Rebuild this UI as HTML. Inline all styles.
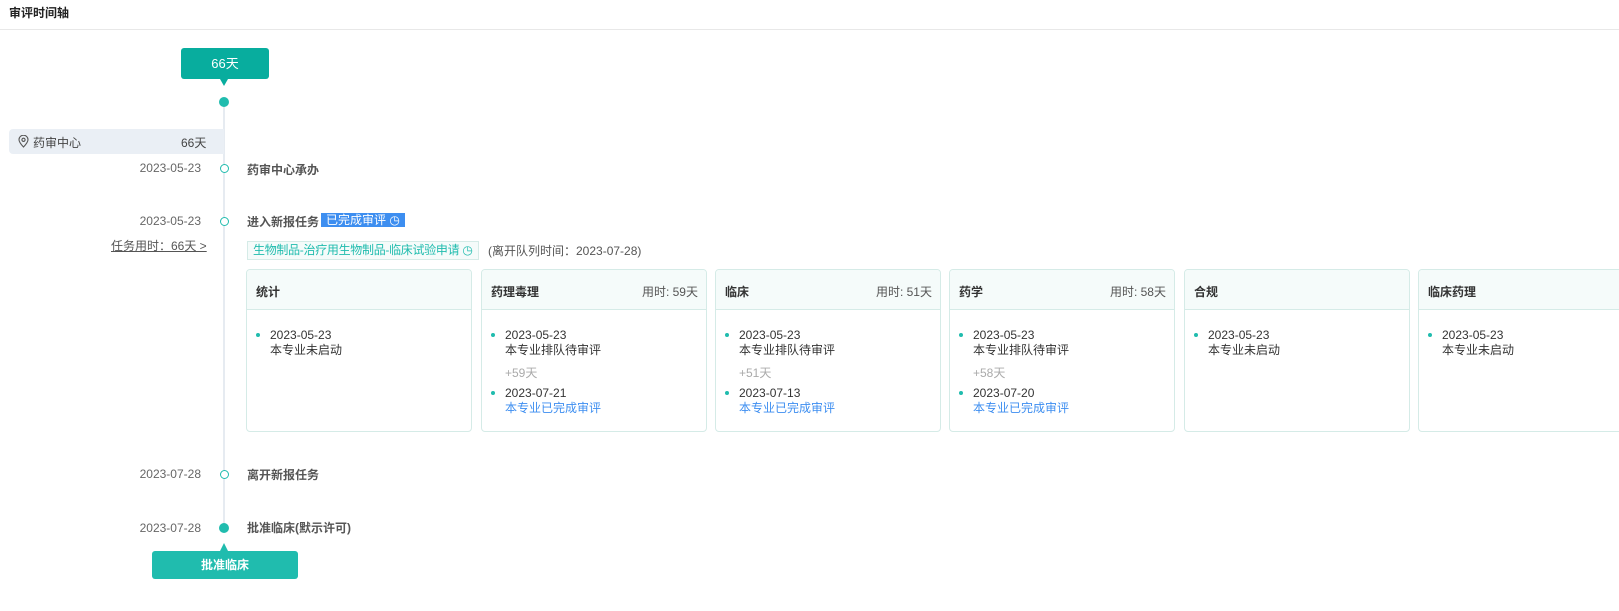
<!DOCTYPE html><html><head><meta charset="utf-8"><style>
*{margin:0;padding:0;box-sizing:border-box}
body{width:1619px;height:611px;overflow:hidden;background:#fff;font-family:"Liberation Sans","Noto Sans CJK SC",sans-serif;font-size:12px;color:#555;position:relative}
.a{position:absolute;white-space:nowrap}
.hdr{left:0;top:0;width:1619px;height:30px;border-bottom:1px solid #e8e8e8}
.hdr span{position:absolute;left:9px;top:4px;font-weight:bold;color:#222;font-size:12px}
.date{color:#666;width:201px;text-align:right;left:0}
.t{left:247px;font-weight:bold;color:#555}
.dot{width:9px;height:9px;border-radius:50%;left:220px}
.o{border:1.5px solid #20bcae;background:#fff}
.f{background:#20bcae}
.card{position:absolute;top:269px;width:226px;height:163px;border:1px solid #d5ebe7;border-radius:4px;overflow:hidden}
.card .h{height:40px;background:#f5fbfa;border-bottom:1px solid #d5ebe7;padding:13px 9px 0;font-weight:bold;color:#333;position:relative}
.card .h i{position:absolute;right:8px;top:13px;font-style:normal;font-weight:normal;color:#555}
.it{position:relative;padding-left:23px;color:#333;line-height:15px}
.it:before{content:"";position:absolute;left:9px;top:5px;width:4px;height:4px;border-radius:50%;background:#20bcae}
.g{color:#aaa;padding-left:23px;margin:6px 0 5px}
.b{color:#3d8ef0}
</style></head><body>
<div class="a hdr"><span>审评时间轴</span></div>
<div class="a" style="left:181px;top:48px;width:88px;height:31px;background:#08ad9e;border-radius:3px;color:#fff;text-align:center;line-height:31px;font-size:13px">66天</div>
<div class="a" style="left:220px;top:79px;border-left:4px solid transparent;border-right:4px solid transparent;border-top:7px solid #08ad9e"></div>
<div class="a" style="left:223px;top:102px;width:2px;height:426px;background:#e6ebf1"></div>
<div class="a dot f" style="top:97px;width:10px;height:10px;left:219px"></div>
<div class="a" style="left:9px;top:129px;width:215px;height:25px;background:#eaeff5;border-radius:4px 0 0 4px"></div>
<svg class="a" style="left:18px;top:135px" width="11" height="13" viewBox="0 0 11 13"><path d="M5.5 12C2.5 8.8 1 6.5 1 4.7A4.5 4.5 0 0 1 10 4.7C10 6.5 8.5 8.8 5.5 12Z" fill="none" stroke="#555" stroke-width="1.1"/><circle cx="5.5" cy="4.8" r="1.6" fill="none" stroke="#555" stroke-width="1.1"/></svg>
<div class="a" style="left:33px;top:134px;color:#444">药审中心</div>
<div class="a" style="left:181px;top:134px;color:#444">66天</div>
<div class="a date" style="top:161px">2023-05-23</div><div class="a dot o" style="top:164px"></div><div class="a t" style="top:161px">药审中心承办</div>
<div class="a date" style="top:214px">2023-05-23</div><div class="a dot o" style="top:217px"></div><div class="a t" style="top:213px">进入新报任务</div>
<div class="a" style="left:321px;top:213px;height:14px;background:#3d8ef0;color:#fff;padding:0 5px;line-height:14px">已完成审评 ◷</div>
<div class="a" style="left:111px;top:237px;color:#555;text-decoration:underline">任务用时：66天 &gt;</div>
<div class="a" style="left:247px;top:241px;width:232px;height:19px;border:1px solid #d5ebe7;background:#f5fbfa;color:#20bcae;padding:0 5px;line-height:17px;overflow:hidden;letter-spacing:-0.3px">生物制品-治疗用生物制品-临床试验申请 ◷</div>
<div class="a" style="left:488px;top:242px;color:#555">(离开队列时间：2023-07-28)</div>

<div class="card" style="left:246px"><div class="h">统计</div><div style="padding-top:18px"><div class="it">2023-05-23<br>本专业未启动</div></div></div>
<div class="card" style="left:481px"><div class="h">药理毒理<i>用时: 59天</i></div><div style="padding-top:18px"><div class="it">2023-05-23<br>本专业排队待审评</div><div class="g">+59天</div><div class="it">2023-07-21<br><span class="b">本专业已完成审评</span></div></div></div>
<div class="card" style="left:715px"><div class="h">临床<i>用时: 51天</i></div><div style="padding-top:18px"><div class="it">2023-05-23<br>本专业排队待审评</div><div class="g">+51天</div><div class="it">2023-07-13<br><span class="b">本专业已完成审评</span></div></div></div>
<div class="card" style="left:949px"><div class="h">药学<i>用时: 58天</i></div><div style="padding-top:18px"><div class="it">2023-05-23<br>本专业排队待审评</div><div class="g">+58天</div><div class="it">2023-07-20<br><span class="b">本专业已完成审评</span></div></div></div>
<div class="card" style="left:1184px"><div class="h">合规</div><div style="padding-top:18px"><div class="it">2023-05-23<br>本专业未启动</div></div></div>
<div class="card" style="left:1418px"><div class="h">临床药理</div><div style="padding-top:18px"><div class="it">2023-05-23<br>本专业未启动</div></div></div>

<div class="a date" style="top:467px">2023-07-28</div><div class="a dot o" style="top:470px"></div><div class="a t" style="top:466px">离开新报任务</div>
<div class="a date" style="top:521px">2023-07-28</div><div class="a dot f" style="top:523px;width:10px;height:10px;left:219px"></div><div class="a t" style="top:519px">批准临床(默示许可)</div>
<div class="a" style="left:220px;top:543px;border-left:4px solid transparent;border-right:4px solid transparent;border-bottom:8px solid #20bcae"></div>
<div class="a" style="left:152px;top:551px;width:146px;height:28px;background:#20bcae;border-radius:3px;color:#fff;text-align:center;line-height:28px;font-weight:bold">批准临床</div>
</body></html>
